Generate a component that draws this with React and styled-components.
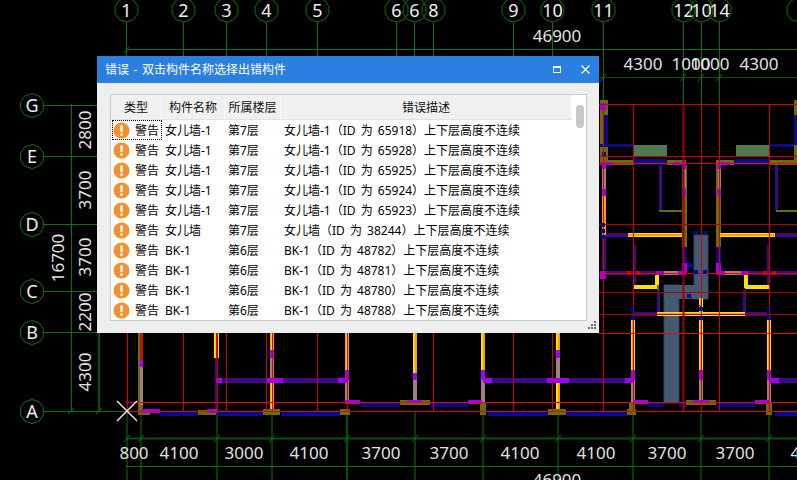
import React from 'react';
import styled, { createGlobalStyle } from 'styled-components';

const GlobalStyle = createGlobalStyle`
  html, body { margin: 0; padding: 0; background: #000; overflow: hidden; }
`;

// ─── Drawing data ─────────────────────────────────────────────────────────────
const GREEN = '#0a740a';
const DARK_GREEN = '#0a4f0a';
const OLIVE = '#6b6b10';
const NAVY = '#0a0a8c';
const MAGENTA = '#a000f5';
const PURPLE = '#3f0a80';
const GRAY = '#a08080';
const YELLOW = '#ffe000';
const ORANGE = '#ff9a10';
const SLATE = '#435a72';

const topBubbles = [
  ['1', 126], ['2', 183], ['3', 226], ['4', 266], ['5', 317], ['6', 396], ['6', 414], ['8', 433],
  ['9', 513], ['10', 552], ['11', 603], ['12', 683], ['10', 701], ['14', 719], ['', 798],
];
const leftBubbles = [['G', 105], ['E', 156], ['D', 224], ['C', 291], ['B', 332], ['A', 411]];
const bottomAxes = [127, 141, 217, 272, 347, 415, 483, 558, 633, 701, 769];

const topDims = [['46900', 557, 36], ['4300', 643, 64], ['1000', 691, 64], ['1000', 710, 64], ['4300', 759, 64]];
const bottomDims = [
  ['800', 134], ['4100', 179], ['3000', 244], ['4100', 309], ['3700', 381], ['3700', 449],
  ['4100', 520], ['4100', 596], ['3700', 667], ['3700', 735], ['4100', 810],
];
const sideDims = [['2800', 85, 130], ['3700', 85, 190], ['3700', 85, 257], ['2200', 85, 312], ['4300', 85, 372], ['16700', 58, 258]];

const redH = [
  [104, '#d00000'], [156, '#c00000'], [163, '#e80000'], [224, '#b00000'], [273, '#e80000'],
  [292, '#a80000'], [314, '#a80000'], [333, '#f00000'], [402, '#f00000'], [411, '#e80000'],
];
const redV = [127, 183, 217, 226, 266, 272, 317, 347, 433, 513, 552, 603, 633, 683, 701, 719, 769];

// x, y, w, h, colour
const walls = [
  // upper right rooms
  [600, 100, 8, 65, OLIVE], [603, 115, 5, 31, NAVY], [600, 103, 6, 7, MAGENTA], [600, 144, 33, 3, NAVY],
  [602, 152, 4, 5, NAVY], [600, 160, 86, 5, OLIVE], [634, 145, 33, 11, '#4f7a4f'], [633, 159, 34, 6, NAVY],
  [673, 162, 13, 3, MAGENTA], [600, 162, 13, 3, MAGENTA], [602, 165, 4, 4, MAGENTA], [602, 169, 4, 20, GRAY],
  [602, 189, 4, 7, MAGENTA], [602, 196, 4, 39, ORANGE], [659, 165, 3, 45, PURPLE], [659, 210, 23, 2, OLIVE],
  [682, 165, 5, 82, OLIVE], [683, 168, 3, 20, GRAY], [682, 165, 4, 4, MAGENTA], [682, 189, 4, 7, MAGENTA],
  [716, 160, 5, 87, OLIVE], [718, 168, 3, 20, GRAY], [717, 165, 4, 4, MAGENTA], [717, 189, 4, 7, MAGENTA],
  [716, 160, 81, 5, OLIVE], [736, 145, 33, 11, '#4f7a4f'], [734, 159, 36, 6, NAVY], [718, 162, 12, 3, MAGENTA],
  [769, 144, 28, 3, NAVY], [775, 165, 3, 45, PURPLE], [776, 210, 21, 2, OLIVE], [794, 100, 3, 60, OLIVE], [794, 115, 3, 30, NAVY],
  // middle right rooms
  [606, 233, 22, 4, PURPLE], [628, 233, 54, 4, YELLOW], [720, 233, 55, 4, YELLOW], [775, 233, 22, 4, PURPLE],
  [628, 234, 54, 2, ORANGE], [720, 234, 55, 2, ORANGE], [602, 235, 4, 35, PURPLE], [633, 245, 3, 40, PURPLE],
  [767, 245, 3, 40, PURPLE], [682, 247, 5, 16, NAVY], [716, 247, 5, 16, NAVY], [682, 263, 5, 10, MAGENTA], [716, 263, 5, 10, MAGENTA],
  [600, 271, 6, 8, MAGENTA], [606, 271, 50, 4, PURPLE], [656, 271, 8, 4, MAGENTA], [664, 271, 15, 4, GRAY], [678, 271, 8, 4, MAGENTA],
  [717, 271, 8, 4, MAGENTA], [725, 271, 16, 4, GRAY], [741, 271, 7, 4, MAGENTA], [748, 271, 49, 4, PURPLE],
  [655, 275, 4, 13, YELLOW], [634, 285, 25, 4, YELLOW], [744, 275, 4, 13, YELLOW], [745, 285, 25, 4, YELLOW],
  [657, 312, 88, 4, YELLOW], [657, 313, 88, 2, ORANGE], [635, 312, 22, 4, PURPLE], [745, 312, 22, 4, PURPLE],
  [657, 290, 3, 22, PURPLE], [657, 285, 2, 5, OLIVE],
  [743, 290, 3, 22, PURPLE], [631, 316, 4, 54, YELLOW], [699, 298, 4, 72, YELLOW], [767, 316, 4, 54, YELLOW],
  [632, 316, 2, 54, ORANGE], [700, 298, 2, 72, ORANGE], [768, 316, 2, 54, ORANGE],
  // bottom rooms, vertical walls
  [138, 333, 5, 78, OLIVE], [140, 360, 3, 7, MAGENTA], [140, 367, 3, 38, GRAY], [140, 333, 3, 27, '#c01010'],
  [214, 333, 5, 25, YELLOW], [216, 333, 2, 25, '#e00000'], [215, 358, 3, 52, PURPLE],
  [270, 333, 4, 17, ORANGE], [271, 333, 2, 17, YELLOW], [270, 350, 4, 8, MAGENTA], [270, 358, 4, 20, GRAY], [270, 378, 4, 4, MAGENTA],
  [270, 382, 4, 28, ORANGE], [271, 382, 2, 28, YELLOW],
  [345, 333, 4, 37, ORANGE], [346, 333, 2, 37, YELLOW], [345, 370, 4, 10, MAGENTA], [345, 380, 4, 20, GRAY], [345, 400, 4, 4, MAGENTA],
  [413, 333, 4, 40, YELLOW], [415, 333, 2, 40, ORANGE], [413, 373, 4, 7, MAGENTA], [413, 380, 4, 22, GRAY],
  [481, 333, 4, 37, YELLOW], [483, 333, 2, 37, ORANGE], [481, 370, 4, 10, MAGENTA], [481, 380, 4, 22, GRAY], [480, 402, 6, 13, OLIVE],
  [556, 333, 4, 17, YELLOW], [558, 333, 2, 17, ORANGE], [556, 350, 4, 8, MAGENTA], [556, 358, 4, 20, GRAY], [556, 378, 4, 4, MAGENTA],
  [556, 382, 4, 28, YELLOW], [558, 382, 2, 28, ORANGE],
  [631, 370, 4, 10, MAGENTA], [631, 380, 4, 22, GRAY], [629, 402, 6, 13, OLIVE],
  [699, 370, 4, 10, MAGENTA], [699, 380, 4, 22, GRAY],
  [767, 370, 4, 10, MAGENTA], [767, 380, 4, 22, GRAY], [766, 402, 6, 13, OLIVE],
  // bottom rooms, cross walls
  [216, 378, 6, 5, MAGENTA], [222, 378, 44, 5, PURPLE], [266, 378, 17, 5, MAGENTA], [283, 378, 55, 5, PURPLE], [338, 378, 9, 5, MAGENTA],
  [483, 378, 9, 5, MAGENTA], [492, 378, 55, 5, PURPLE], [547, 378, 22, 5, MAGENTA], [569, 378, 56, 5, PURPLE], [625, 378, 8, 5, MAGENTA],
  [769, 378, 10, 5, MAGENTA], [779, 378, 18, 5, PURPLE],
  // wall lines along the axes
  [138, 411, 12, 4, OLIVE], [141, 409, 19, 4, MAGENTA], [160, 411, 38, 5, NAVY], [198, 410, 18, 5, OLIVE], [207, 409, 10, 4, MAGENTA],
  [218, 411, 45, 5, NAVY], [263, 409, 17, 6, OLIVE], [281, 411, 59, 5, NAVY], [340, 409, 10, 6, OLIVE],
  [347, 400, 13, 4, MAGENTA], [361, 402, 39, 5, NAVY], [400, 400, 30, 5, OLIVE], [407, 400, 15, 3, MAGENTA], [430, 402, 38, 5, NAVY],
  [468, 400, 14, 4, MAGENTA], [488, 411, 60, 5, NAVY], [548, 409, 18, 6, OLIVE], [566, 411, 61, 5, NAVY], [627, 409, 9, 6, OLIVE],
  [633, 400, 15, 4, MAGENTA], [648, 402, 16, 5, NAVY], [679, 402, 7, 5, NAVY], [686, 400, 30, 5, OLIVE], [693, 400, 16, 3, MAGENTA],
  [716, 402, 39, 5, NAVY], [755, 400, 14, 4, MAGENTA], [775, 411, 22, 5, NAVY],
];

// the markers along the core walls
const markers = [
  [603, 225, NAVY], [603, 231, NAVY], [603, 237, NAVY], [696, 233, NAVY], [705, 233, NAVY], [689, 265, NAVY], [692, 265, NAVY],
  [696, 272, NAVY], [705, 272, NAVY], [689, 296, NAVY], [701, 309, NAVY], [701, 318, NAVY], [633, 309, NAVY], [633, 318, NAVY],
  [769, 309, NAVY], [769, 318, NAVY], [629, 273, '#e00000'], [638, 273, '#e00000'], [765, 273, '#e00000'], [774, 273, '#e00000'],
];

const octagon = (cx, cy, r = 12) =>
  Array.from({ length: 10 }, (_, i) => {
    const a = (Math.PI * 2 * i) / 10 + Math.PI / 10;
    return `${(cx + r * Math.cos(a)).toFixed(1)},${(cy + r * Math.sin(a)).toFixed(1)}`;
  }).join(' ');

const rows = [
  ['女儿墙-1', '第7层', '女儿墙-1', 65918],
  ['女儿墙-1', '第7层', '女儿墙-1', 65928],
  ['女儿墙-1', '第7层', '女儿墙-1', 65925],
  ['女儿墙-1', '第7层', '女儿墙-1', 65924],
  ['女儿墙-1', '第7层', '女儿墙-1', 65923],
  ['女儿墙', '第7层', '女儿墙', 38244],
  ['BK-1', '第6层', 'BK-1', 48782],
  ['BK-1', '第6层', 'BK-1', 48781],
  ['BK-1', '第6层', 'BK-1', 48780],
  ['BK-1', '第6层', 'BK-1', 48788],
];

// ─── Styled components ────────────────────────────────────────────────────────
const Canvas = styled.div`
  position: relative;
  width: 797px;
  height: 480px;
  background: #000;
  overflow: hidden;
`;

const Drawing = styled.svg`
  display: block;
`;

const DimText = styled.text`
  font-family: "Noto Sans", sans-serif;
  font-size: 17px;
  fill: #e2e2e2;
  text-anchor: middle;
`;

const BubbleText = styled.text`
  font-family: "Noto Sans", sans-serif;
  font-size: 18px;
  fill: #eeeeee;
  text-anchor: middle;
`;

const Dialog = styled.div`
  position: absolute;
  left: 97px;
  top: 56px;
  width: 502px;
  height: 277px;
  display: flex;
  flex-direction: column;
  background: #eeeeee;
  font-family: "Noto Sans", "Noto Sans CJK SC", sans-serif;
  font-size: 12px;
  color: #000;
`;

const TitleBar = styled.div`
  flex: 0 0 27px;
  display: flex;
  align-items: center;
  padding: 0 8px;
  gap: 20px;
  background: #2b7fe0;
  color: #fff;
`;

const Title = styled.div`
  flex: 1;
  padding-top: 1px;
  line-height: 26px;
  word-spacing: 1.5px;
`;

const WindowButton = styled.svg`
  display: block;
  flex: none;
`;

const Body = styled.div`
  flex: 1;
  min-height: 0;
  padding: 11px 12px 12px 13px;
  position: relative;
`;

const ListBox = styled.div`
  height: 100%;
  box-sizing: border-box;
  border: 1px solid #c8c8c8;
  background: #fff;
  display: flex;
`;

const ListColumn = styled.div`
  flex: 0 0 461px;
  display: flex;
  flex-direction: column;
`;

const HeaderRow = styled.div`
  flex: 0 0 25px;
  display: grid;
  grid-template-columns: 51px 63px 56px 1fr;
  box-sizing: border-box;
  border-bottom: 1px solid #e2e2e2;
`;

const HeaderCell = styled.div`
  background: #f0f0f0;
  border-right: 1px solid #fafafa;
  text-align: center;
  padding-top: 1px;
  line-height: 23px;
  color: #111;
`;

const Row = styled.div`
  flex: 0 0 20px;
  display: grid;
  grid-template-columns: 51px 63px 56px 1fr;
  grid-template-rows: 20px;
  line-height: 20px;
  white-space: nowrap;
`;

const TypeCell = styled.div`
  display: flex;
  align-items: center;
  gap: 5px;
  margin-left: 1px;
  padding-left: 1px;
  box-sizing: border-box;
  height: 20px;
  outline: ${({ $focused }) => ($focused ? '1px dotted #000' : 'none')};
  outline-offset: -1px;
`;

const TypeLabel = styled.span`
  padding-top: 2px;
`;

const NameCell = styled.div`
  padding: 1px 0 0 3px;
`;

const FloorCell = styled.div`
  padding: 1px 0 0 3px;
`;

const DescCell = styled.div`
  padding: 1px 0 0 3px;
  word-spacing: 2px;
`;

const ScrollTrack = styled.div`
  flex: 1;
  padding: 10px 3px 0 4px;
`;

const ScrollThumb = styled.div`
  height: 23px;
  width: 8px;
  border-radius: 4px;
  background: #c8c8c8;
`;

const Grip = styled.svg`
  position: absolute;
  right: 2px;
  bottom: 2px;
  display: block;
`;

// ─── Parts ────────────────────────────────────────────────────────────────────
function WarnIcon() {
  return (
    <svg width="17" height="17" viewBox="0 0 17 17" style={{ flex: 'none' }}>
      <circle cx="8.5" cy="8.5" r="8" fill="#f7902a" />
      <rect x="7.2" y="3.2" width="2.6" height="7" rx="1" fill="#fff" />
      <circle cx="8.5" cy="12.6" r="1.4" fill="#fff" />
    </svg>
  );
}

function CadDrawing() {
  return (
    <Drawing width="797" height="480" viewBox="0 0 797 480">
      {/* axes */}
      {topBubbles.map(([, x], i) => (
        <line key={i} x1={x + 0.5} y1="22" x2={x + 0.5} y2="104" stroke={GREEN} />
      ))}
      <line x1="126" y1="49.5" x2="797" y2="49.5" stroke={GREEN} />
      <line x1="600" y1="77.5" x2="797" y2="77.5" stroke={DARK_GREEN} />
      {leftBubbles.map(([, y], i) => (
        <line key={i} x1="44" y1={y + 0.5} x2="126" y2={y + 0.5} stroke={GREEN} />
      ))}
      <line x1="71.5" y1="104" x2="71.5" y2="411" stroke={GREEN} />
      <line x1="99" y1="333" x2="99" y2="411" stroke={DARK_GREEN} strokeWidth="2" />
      <line x1="126" y1="438.5" x2="797" y2="438.5" stroke={DARK_GREEN} strokeWidth="2" />
      <line x1="126" y1="466.5" x2="797" y2="466.5" stroke={GREEN} />
      {bottomAxes.map((x) => (
        <line
          key={x}
          x1={x}
          y1="411"
          x2={x}
          y2="480"
          stroke={x === 347 ? DARK_GREEN : GREEN}
          strokeWidth={x === 347 ? 2 : 1}
        />
      ))}
      {bottomAxes.map((x) => (
        <path key={x} d={`M${x - 3} 442 L${x + 3} 435`} stroke={GREEN} />
      ))}
      {[603, 683, 701, 719].map((x) => (
        <path key={x} d={`M${x - 3} 81 L${x + 3} 74`} stroke={GREEN} />
      ))}
      <path d="M124 53 L129 47 M68 414 L74 408 M96 414 L102 408" stroke={GREEN} />

      {/* walls */}
      <rect x="664" y="285" width="15" height="118" fill={SLATE} stroke="#33455a" />
      <rect x="694" y="235" width="14" height="64" fill={SLATE} stroke="#33455a" />
      <rect x="664" y="285" width="44" height="14" fill={SLATE} />
      {walls.map(([x, y, w, h, c], i) => (
        <rect key={i} x={x} y={y} width={w} height={h} fill={c} />
      ))}

      {/* red beams */}
      {redV.map((x) => (
        <line
          key={x}
          x1={x + 0.5}
          y1={x < 600 ? 333 : 104}
          x2={x + 0.5}
          y2="411"
          stroke={x === 683 ? '#a00000' : '#d40000'}
          strokeWidth={x === 683 ? 2 : 1}
        />
      ))}
      {redH.map(([y, c]) => (
        <line key={y} x1={y > 333 ? 126 : 599} y1={y + 0.5} x2="797" y2={y + 0.5} stroke={c} />
      ))}

      {markers.map(([x, y, c], i) => (
        <rect key={i} x={x - 2} y={y - 2} width="4" height="4" fill={c} />
      ))}
      <path d="M689 296 L701 307 M689 265 L696 272" stroke={NAVY} />

      {/* bubbles */}
      {topBubbles.map(([label, x], i) => (
        <g key={i}>
          <polygon points={octagon(x + 0.5, 10)} fill="none" stroke={GREEN} />
          <BubbleText x={x + 0.5} y="17">{label}</BubbleText>
        </g>
      ))}
      {leftBubbles.map(([label, y]) => (
        <g key={label}>
          <polygon points={octagon(32, y + 0.5)} fill="none" stroke={GREEN} />
          <BubbleText x="32" y={y + 7}>{label}</BubbleText>
        </g>
      ))}

      {/* dimensions */}
      {topDims.map(([t, x, y], i) => (
        <DimText key={i} x={x} y={y + 6}>{t}</DimText>
      ))}
      {bottomDims.map(([t, x], i) => (
        <DimText key={i} x={x} y="459">{t}</DimText>
      ))}
      <DimText x="557" y="486">46900</DimText>
      {sideDims.map(([t, x, y], i) => (
        <DimText key={i} x={x} y={y} transform={`rotate(-90 ${x} ${y}) translate(0 6)`}>{t}</DimText>
      ))}

      {/* origin mark */}
      <path d="M117 401 L137 421 M137 401 L117 421" stroke="#f0f0f0" strokeWidth="1.4" />
    </Drawing>
  );
}

// ─── Component ────────────────────────────────────────────────────────────────
export default function App() {
  return (
    <>
      <GlobalStyle />
      <Canvas>
        <CadDrawing />
        <Dialog>
          <TitleBar>
            <Title>错误 - 双击构件名称选择出错构件</Title>
            <WindowButton width="8" height="7" viewBox="0 0 8 7">
              <path d="M0.5 1 H7.5 V6.5 H0.5 Z" fill="none" stroke="#fff" />
              <rect x="0" y="0" width="8" height="2" fill="#fff" />
            </WindowButton>
            <WindowButton width="9" height="9" viewBox="0 0 9 9" style={{ marginRight: 1 }}>
              <path d="M0.5 0.5 L8.5 8.5 M8.5 0.5 L0.5 8.5" stroke="#fff" strokeWidth="1.2" />
            </WindowButton>
          </TitleBar>
          <Body>
            <ListBox>
              <ListColumn>
                <HeaderRow>
                  <HeaderCell>类型</HeaderCell>
                  <HeaderCell>构件名称</HeaderCell>
                  <HeaderCell>所属楼层</HeaderCell>
                  <HeaderCell>错误描述</HeaderCell>
                </HeaderRow>
                {rows.map(([name, floor, desc, id], i) => (
                  <Row key={id}>
                    <TypeCell $focused={i === 0}>
                      <WarnIcon />
                      <TypeLabel>警告</TypeLabel>
                    </TypeCell>
                    <NameCell>{name}</NameCell>
                    <FloorCell>{floor}</FloorCell>
                    <DescCell>{`${desc}（ID 为 ${id}）上下层高度不连续`}</DescCell>
                  </Row>
                ))}
              </ListColumn>
              <ScrollTrack>
                <ScrollThumb />
              </ScrollTrack>
            </ListBox>
            <Grip width="10" height="10" viewBox="0 0 10 10">
              {[[7, 0], [4, 3], [7, 3], [1, 6], [4, 6], [7, 6]].map(([x, y]) => (
                <rect key={`${x}-${y}`} x={x} y={y} width="2" height="2" fill="#6a6a6a" />
              ))}
            </Grip>
          </Body>
        </Dialog>
      </Canvas>
    </>
  );
}
